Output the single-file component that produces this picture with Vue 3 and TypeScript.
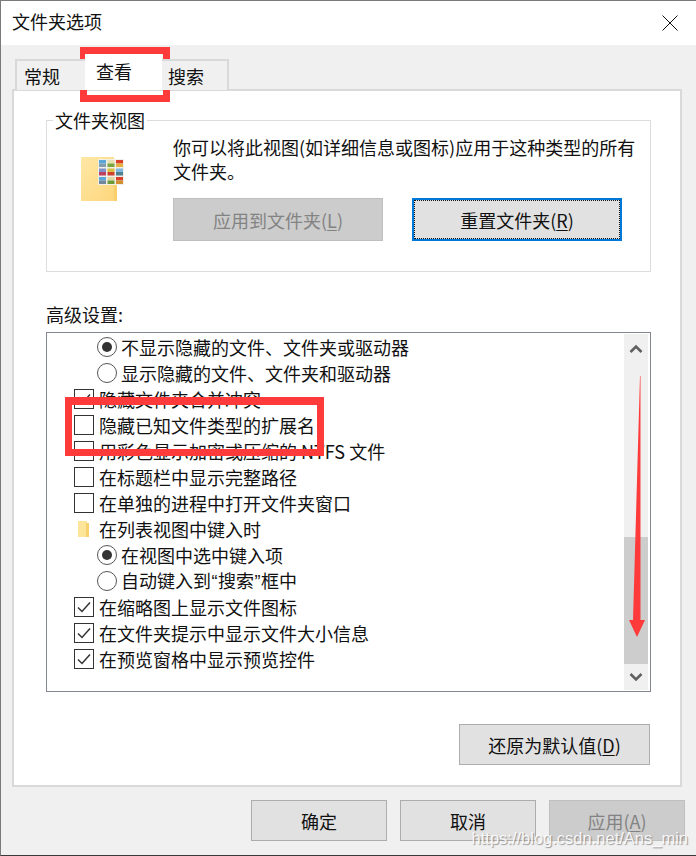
<script setup lang="ts">
type Row = { kind: 'check' | 'radio' | 'folder'; label: string; on?: boolean }
const rows: Row[] = [
  { kind: 'radio', label: '不显示隐藏的文件、文件夹或驱动器', on: true },
  { kind: 'radio', label: '显示隐藏的文件、文件夹和驱动器' },
  { kind: 'check', label: '隐藏文件夹合并冲突', on: true },
  { kind: 'check', label: '隐藏已知文件类型的扩展名' },
  { kind: 'check', label: '用彩色显示加密或压缩的 NTFS 文件' },
  { kind: 'check', label: '在标题栏中显示完整路径' },
  { kind: 'check', label: '在单独的进程中打开文件夹窗口' },
  { kind: 'folder', label: '在列表视图中键入时' },
  { kind: 'radio', label: '在视图中选中键入项', on: true },
  { kind: 'radio', label: '自动键入到“搜索”框中' },
  { kind: 'check', label: '在缩略图上显示文件图标', on: true },
  { kind: 'check', label: '在文件夹提示中显示文件大小信息', on: true },
  { kind: 'check', label: '在预览窗格中显示预览控件', on: true },
]
const splitQuotes = (s: string): string[] => s.split(/([“”])/)
const isQuote = (s: string): boolean => s === '“' || s === '”'
const palette = [
  ['#5aa6d8', '#7f9fb0'],
  ['#e8e0b0', '#7aa83f'],
  ['#d8402a', '#e8b040'],
  ['#8090c8', '#c04060'],
  ['#d8c040', '#d04030'],
  ['#7fb8e0', '#50808f'],
  ['#5aa6d8', '#70889a'],
  ['#e0d8a0', '#6a9a3a'],
  ['#d8402a', '#d09030'],
]
const thumbs = palette.map(([top, bottom], i) => ({
  top,
  bottom,
  x: 18 + (i % 3) * 8.5,
  y: 4 + Math.floor(i / 3) * 8.5,
}))
</script>

<template>
  <div class="dialog">
    <header class="titlebar">
      <span class="title">文件夹选项</span>
      <svg class="close" width="16" height="16" viewBox="0 0 16 16"><path d="M0.5 0.5L15.5 15.5M15.5 0.5L0.5 15.5" stroke="#111" stroke-width="1" fill="none" /></svg>
    </header>

    <main class="body">
      <nav class="tabs">
        <span class="tab tab-general">常规</span>
        <span class="tab tab-view">查看</span>
        <span class="tab tab-search">搜索</span>
      </nav>

      <section class="pane">
        <fieldset class="group">
          <legend>文件夹视图</legend>
          <div class="group-inner">
            <svg class="big-folder" width="43" height="46" viewBox="0 0 43 46">
              <defs>
                <linearGradient id="folderFill" x1="0" y1="0" x2="1" y2="1">
                  <stop offset="0" stop-color="#ffe8a6" />
                  <stop offset="1" stop-color="#fdd67c" />
                </linearGradient>
              </defs>
              <rect x="0" y="1" width="33" height="44" fill="url(#folderFill)" />
              <rect x="33" y="4" width="3" height="41" fill="#f9cf6c" />
              <rect x="17" y="3" width="26" height="26" fill="#f1efe8" />
              <g v-for="(t, i) in thumbs" :key="i">
                <rect :x="t.x" :y="t.y" width="7" height="3.5" :fill="t.top" />
                <rect :x="t.x" :y="t.y + 3.5" width="7" height="3.5" :fill="t.bottom" />
              </g>
            </svg>
            <div class="group-main">
              <p class="desc">你可以将此视图(如详细信息或图标)应用于这种类型的所有文件夹。</p>
              <div class="group-btns">
                <button class="btn btn-wide btn-disabled">应用到文件夹(<u>L</u>)</button>
                <button class="btn btn-wide btn-focus"><span class="focus-ring">重置文件夹(<u>R</u>)</span></button>
              </div>
            </div>
          </div>
        </fieldset>

        <div class="adv-label">高级设置:</div>

        <div class="listbox">
          <ul class="rows">
            <li v-for="r in rows" :key="r.label" class="row" :class="'row-' + r.kind">
              <svg v-if="r.kind === 'check'" class="ctl" width="20" height="20" viewBox="0 0 20 20">
                <rect x="0.5" y="0.5" width="19" height="19" fill="#fff" stroke="#333" />
                <path v-if="r.on" d="M4 10.5L8 14.5L16 5.5" fill="none" stroke="#333" stroke-width="1.5" />
              </svg>
              <svg v-else-if="r.kind === 'radio'" class="ctl" width="20" height="20" viewBox="0 0 20 20">
                <circle cx="10" cy="10" r="9.5" fill="#fff" stroke="#555" />
                <circle v-if="r.on" cx="10" cy="10" r="5" fill="#333" />
              </svg>
              <svg v-else class="ctl" width="13" height="17" viewBox="0 0 13 17">
                <rect x="1" y="0" width="9" height="16" fill="#fde59c" />
                <rect x="9" y="2" width="3" height="14" fill="#f8d26f" />
              </svg>
              <span><template v-for="(part, i) in splitQuotes(r.label)" :key="i"><span v-if="isQuote(part)" class="quote">{{ part }}</span><template v-else>{{ part }}</template></template></span>
            </li>
          </ul>
          <div class="scrollbar">
            <svg class="sb-arrow sb-up" width="24" height="24" viewBox="0 0 24 24"><path d="M6.5 15L12 9.5L17.5 15" fill="none" stroke="#606060" stroke-width="2.6" /></svg>
            <div class="sb-track"><div class="sb-thumb"></div></div>
            <svg class="sb-arrow sb-down" width="24" height="24" viewBox="0 0 24 24"><path d="M6.5 9L12 14.5L17.5 9" fill="none" stroke="#606060" stroke-width="2.6" /></svg>
          </div>
        </div>

        <div class="restore-row">
          <button class="btn btn-restore">还原为默认值(<u>D</u>)</button>
        </div>
      </section>

      <footer class="actions">
        <button class="btn btn-action">确定</button>
        <button class="btn btn-action">取消</button>
        <button class="btn btn-action btn-disabled">应用(<u>A</u>)</button>
      </footer>
    </main>

    <div class="mark mark-tab"></div>
    <div class="mark mark-row"></div>
    <svg class="arrow" width="20" height="264" viewBox="0 0 20 264">
      <path d="M12.5 0L12 0L5 244L1 244L9 261L17 244L12.5 244Z" fill="#ff3a3a" />
    </svg>
    <div class="watermark">https://blog.csdn.net/Ans_min</div>
  </div>
</template>

<style scoped>
.dialog {
  position: relative;
  box-sizing: border-box;
  width: 696px;
  height: 856px;
  overflow: hidden;
  border-top: 1px solid #7a7a7a;
  border-left: 1px solid #7a7a7a;
  border-bottom: 1px solid #3a3a3a;
  background: #f0f0f0;
  font-family: "Noto Sans CJK SC", "Liberation Sans", sans-serif;
  font-size: 18px;
  line-height: 26px;
  color: #111;
}
.titlebar {
  height: 44px;
  background: #fff;
  display: flex;
  align-items: center;
  justify-content: space-between;
  padding: 0 18px 0 11px;
}
.title { font-size: 18px; margin-top: -4px; }
.close { flex: none; }
.body {
  display: flex;
  flex-direction: column;
  padding: 0 14px 0 11px;
}
.tabs {
  display: flex;
  height: 45px;
  align-items: flex-end;
  padding-left: 3px;
  margin-bottom: -1px;
  position: relative;
  z-index: 1;
}
.tab {
  box-sizing: border-box;
  height: 31px;
  border: 2px solid #d9d9d9;
  border-bottom: none;
  line-height: 31px;
  background: #f0f0f0;
}
.tab-general { width: 70px; padding-left: 7px; border-right: none; }
.tab-view {
  width: 77px;
  height: 36px;
  padding-left: 9px;
  line-height: 31px;
  background: #fff;
  border-color: #fff;
}
.tab-search { width: 67px; padding-left: 6px; border-left: none; }
.pane {
  box-sizing: border-box;
  height: 698px;
  background: #fff;
  border: 2px solid #d9d9d9;
  padding: 0 29px 0 32px;
  display: flex;
  flex-direction: column;
}
.group {
  box-sizing: border-box;
  width: 605px;
  height: 165px;
  margin: 16px 0 0;
  padding: 0;
  border: 1px solid #dcdcdc;
  min-width: 0;
}
.group legend {
  margin-left: 6px;
  padding: 0 2px;
  line-height: 26px;
}
.group-inner {
  display: flex;
  padding-top: 2px;
}
.big-folder {
  flex: none;
  margin: 21px 0 0 34px;
}
.group-main {
  margin-left: 49px;
  width: 480px;
  display: flex;
  flex-direction: column;
}
.desc {
  margin: 0;
  width: 466px;
  line-height: 24px;
  height: 59px;
}
.group-btns {
  display: flex;
  gap: 29px;
  margin-top: 4px;
}
.btn {
  box-sizing: border-box;
  font: inherit;
  color: #111;
  background: #e1e1e1;
  border: 1px solid #adadad;
  padding: 0;
  line-height: 26px;
}
.btn u { text-decoration: underline; text-underline-offset: 2px; }
.btn-wide { width: 210px; height: 43px; }
.btn-disabled {
  background: #cccccc;
  border-color: #bfbfbf;
  color: #838383;
}
.btn-focus {
  border: 2px solid #0078d7;
  padding: 0;
  display: flex;
}
.focus-ring {
  flex: 1;
  border: 1px dotted #111;
  display: flex;
  align-items: center;
  justify-content: center;
  white-space: pre;
}
.adv-label {
  margin-top: 29px;
  height: 31px;
  line-height: 26px;
}
.listbox {
  box-sizing: border-box;
  width: 605px;
  height: 360px;
  border: 1px solid #828790;
  padding: 1px 2px 1px 0;
  display: flex;
  justify-content: space-between;
}
.rows {
  list-style: none;
  margin: 0;
  padding: 0;
}
.row {
  height: 26px;
  display: flex;
  align-items: center;
  white-space: pre;
}
.quote {
  display: inline-block;
  width: 7px;
  font-family: "Liberation Sans", sans-serif;
  text-align: center;
}
.ctl { flex: none; }
.row-check { padding-left: 27px; }
.row-check .ctl { margin-right: 5px; }
.row-radio { padding-left: 50px; }
.row-radio .ctl { margin-right: 4px; }
.row-folder { padding-left: 30px; }
.row-folder .ctl { margin-right: 9px; }
.scrollbar {
  width: 24px;
  background: #f0f0f0;
  display: flex;
  flex-direction: column;
}
.sb-arrow { flex: none; }
.sb-up { margin-top: 3px; }
.sb-down { margin: 1px 0; }
.sb-track {
  flex: 1;
  display: flex;
  flex-direction: column;
  justify-content: flex-end;
}
.sb-thumb {
  height: 127px;
  background: #cdcdcd;
}
.restore-row {
  display: flex;
  justify-content: flex-end;
  margin: 32px 1px 0 0;
}
.btn-restore { width: 191px; height: 41px; }
.actions {
  display: flex;
  justify-content: flex-end;
  gap: 13px;
  margin-top: 13px;
  margin-right: -3px;
}
.btn-action { width: 136px; height: 41px; }
.mark {
  position: absolute;
  box-sizing: border-box;
  border: 7px solid #ff3a3a;
}
.mark-tab { left: 79px; top: 46px; width: 90px; height: 55px; }
.mark-row { left: 64px; top: 396px; width: 259px; height: 59px; border-top-width: 8px; }
.arrow { position: absolute; left: 627px; top: 375px; }
.watermark {
  position: absolute;
  right: 8px;
  bottom: 7px;
  font-family: "Liberation Sans", sans-serif;
  font-size: 16.5px;
  line-height: 20px;
  color: rgba(255, 255, 255, 0.9);
  text-shadow: 1px 1px 1px rgba(90, 90, 90, 0.6);
  white-space: nowrap;
}
</style>
